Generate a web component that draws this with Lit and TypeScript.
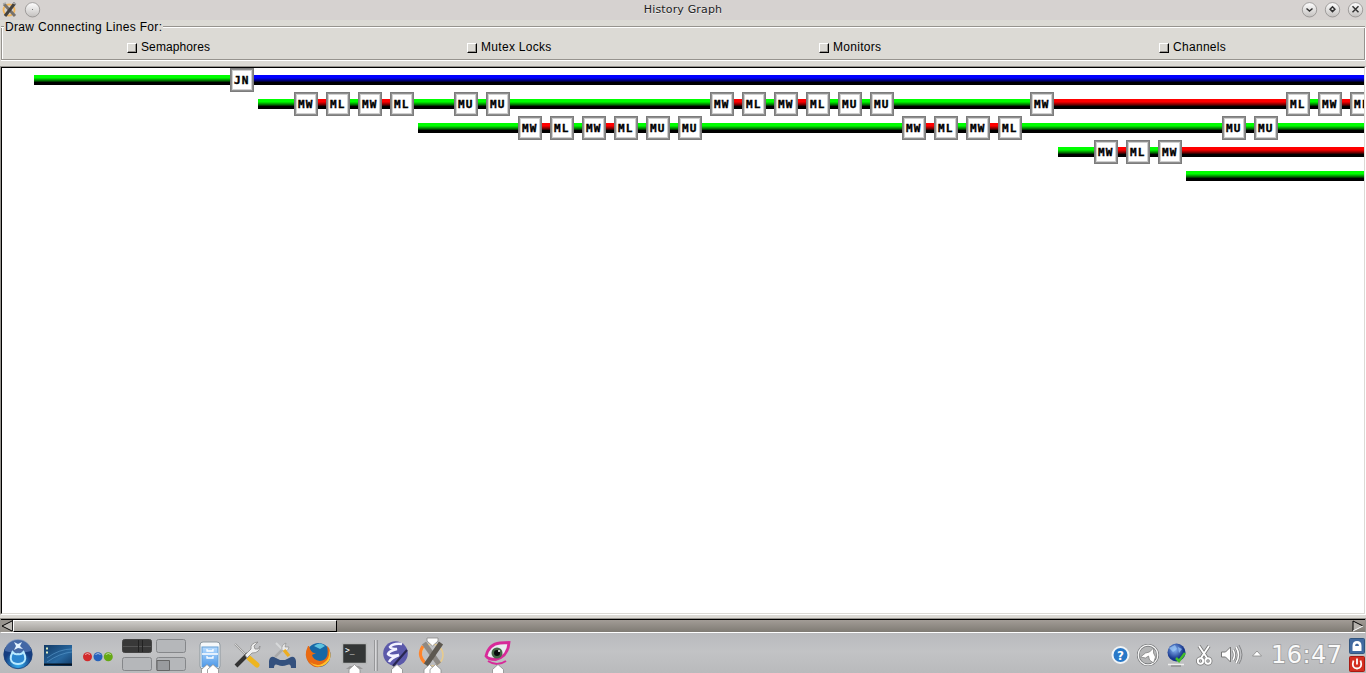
import { LitElement, html, css, svg } from "lit";
import { customElement } from "lit/decorators.js";
import { classMap } from "lit/directives/class-map.js";

const MW_ML = ["MW", "r8", "ML"];

const ROWS: { start: number; items: string[] }[] = [
  { start: 32, items: ["g196", "JN", "b1110"] },
  {
    start: 256,
    items: ["g36", ...MW_ML, "g8", ...MW_ML, "g40", "MU", "g8", "MU", "g200", ...MW_ML, "g8", ...MW_ML,
      "g8", "MU", "g8", "MU", "g136", "MW", "r232", "ML", "g8", ...MW_ML],
  },
  {
    start: 416,
    items: ["g100", ...MW_ML, "g8", ...MW_ML, "g8", "MU", "g8", "MU", "g200", ...MW_ML, "g8", ...MW_ML,
      "g200", "MU", "g8", "MU", "g86"],
  },
  { start: 1056, items: ["g36", ...MW_ML, "g8", "MW", "r182"] },
  { start: 1184, items: ["g178"] },
];

@customElement("history-track")
class HistoryTrack extends LitElement {
  static properties = { start: { type: Number }, items: { attribute: false } };
  declare start: number;
  declare items: string[];

  static styles = css`
    :host { display: flex; align-items: center; height: 24px; width: max-content; }
    .lead, .seg { flex: none; }
    .seg { height: 10px; }
    .g { background: linear-gradient(#00ff00 0 3px, #00dc00 3px 4px, #00aa00 4px 5px, #007800 5px 6px, #003c00 6px 7px, #000 7px); }
    .r { background: linear-gradient(#ff0000 0 3px, #dc0000 3px 4px, #aa0000 4px 5px, #780000 5px 6px, #3c0000 6px 7px, #000 7px); }
    .b { background: linear-gradient(#0000ff 0 3px, #0000dc 3px 4px, #0000aa 4px 5px, #000078 5px 6px, #00003c 6px 7px, #000 7px); }
    .node {
      box-sizing: border-box; flex: none; width: 24px; height: 24px; background: #fff;
      border: 1px solid #7c7c7c; box-shadow: inset 0 0 0 1px #8e8e8e, inset 0 0 0 2px #d0d0d0;
      font: bold 11px/22px "DejaVu Sans Mono", monospace; letter-spacing: 1.2px;
      -webkit-text-stroke: .4px #000;
      padding: 1px 0 0 3px; color: #000; overflow: hidden; white-space: nowrap;
    }
  `;

  render() {
    return html`<span class="lead" style="width:${this.start}px"></span>${this.items.map((it) =>
      /\d/.test(it)
        ? html`<span class=${classMap({ seg: true, [it[0]]: true })} style="width:${it.slice(1)}px"></span>`
        : html`<span class="node">${it}</span>`)}`;
  }
}

const up = (x: number) => svg`<path d="M${x} 664.5l5.500 5v4h-11v-4z" fill="#fff" stroke="#8b8b8b" stroke-width=".8"/>`;

@customElement("app-root")
class AppRoot extends LitElement {
  static styles = css`
    :host { display: flex; flex-direction: column; width: 1366px; height: 673px; overflow: hidden; background: #dcdad5; color: #000; }
    .title { flex: none; height: 20px; display: grid; grid-template-columns: 70px 1fr 70px; background: #d6d2d0; }
    .title svg { display: block; }
    .name { text-align: center; font: 11px/20px "DejaVu Sans", sans-serif; letter-spacing: .15px; color: #222; text-shadow: 0 1px #eee; }
    .group { height: 46px; flex: none; display: flex; flex-direction: column; }
    .caption { display: flex; align-items: center; height: 14px; font: 12px/14px "Liberation Sans", sans-serif; letter-spacing: .33px; }
    .caption span { padding: 0 1px; }
    .caption::before { content: ""; width: 3px; height: 2px; margin-left: 1px; background: linear-gradient(#96938e 50%, #fff 50%); }
    .caption::after { content: ""; flex: 1; height: 2px; background: linear-gradient(#96938e 50%, #fff 50%); margin-right: 1px; }
    .checks {
      box-sizing: border-box; height: 32px; margin: -6px 1px 0 1px; border: solid #96938e; border-width: 0 1px 1px;
      box-shadow: inset 1px 0 #fff, 0 1px #fff, 1px 0 #fff; display: flex; padding: 12px 0 0 125px;
      font: 12px/14px "Liberation Sans", sans-serif; letter-spacing: .3px;
    }
    .check { display: flex; align-items: center; gap: 4px; height: 14px; }
    .check i { box-sizing: border-box; width: 10px; height: 10px; margin-top: 1px; background: #dcdad5; border: 1px solid #000; border-top-color: #fff; border-left-color: #fff; box-shadow: inset -1px -1px #96938e; }
    .c0 { width: 340px; letter-spacing: .1px; } .c1 { width: 352px; } .c2 { width: 340px; }
    .canvas {
      box-sizing: border-box; flex: none; height: 549px; background: #fff; overflow: hidden;
      border: 1px solid #96938e; border-right-color: #fff; border-bottom-color: #fff;
    }
    .inner { box-sizing: border-box; height: 547px; border: 1px solid #000; border-right-color: #dcdad5; border-bottom-color: #dcdad5; overflow: hidden; }
    .scroll {
      box-sizing: border-box; flex: none; height: 15px; margin-top: 3px; border: 1px solid #96938e; border-bottom: 1px solid #fff;
      background: linear-gradient(#000 0 1px, #a29c96 1px, #7f7b74); display: flex;
    }
    .scroll svg { flex: none; display: block; }
    .thumb { box-sizing: border-box; height: 12px; width: 324px; margin-top: 1px; border: 1px solid #000; border-top-color: #fff; border-left-color: #fff; background: linear-gradient(#cfcdc9, #a4a19c); }
    .gap { flex: 1; }
    .panel { flex: none; height: 40px; background: linear-gradient(#b9babd, #c2c3c5 45%, #b9babc); }
    .panel svg { display: block; }
    .clock { font: 24px "DejaVu Sans", sans-serif; }
    .help { font: bold 12px "DejaVu Sans", sans-serif; }
    .prompt { font: 8px "DejaVu Sans Mono", monospace; }
  `;

  titleButton(x: number, glyph: string) {
    return svg`<circle cx=${x} cy="9.8" r="7.2" fill="url(#btn)" stroke="#8f8d8b" stroke-width=".8"/>
      <path d=${glyph} fill="none" stroke="#333" stroke-width="1.5"/>`;
  }

  render() {
    return html`
      <div class="title">
        <svg width="70" height="20">
          <defs><linearGradient id="btn" x2="0" y2="1"><stop stop-color="#fff"/><stop offset="1" stop-color="#c3c0be"/></linearGradient></defs>
          <circle cx="9" cy="10" r="5.5" fill="none" stroke="#f3b65a" stroke-width="1.8"/>
          <path d="M4 4l11 12" stroke="#77726d" stroke-width="3"/><path d="M15 3L5 16" stroke="#45423f" stroke-width="3"/>
          <path d="M3 4l3-1M13 3l3 1" stroke="#aaa" stroke-width="1.500"/>
          <circle cx="32.500" cy="9.800" r="7.200" fill="url(#btn)" stroke="#8f8d8b" stroke-width=".8"/><path d="M32 9.500h1" stroke="#777"/>
        </svg>
        <div class="name">History Graph</div>
        <svg width="70" height="20">
          ${this.titleButton(13.5, "M10.5 8.500l3 2.500l3-2.500")}
          ${this.titleButton(36.5, "M36.5 6.800l2.400 2.400l-2.400 2.400l-2.400-2.400z")}
          ${this.titleButton(59.5, "M56.5 6.200l6 6m0-6l-6 6")}
        </svg>
      </div>
      <div class="group">
        <div class="caption"><span>Draw Connecting Lines For:</span></div>
        <div class="checks">
          ${["Semaphores", "Mutex Locks", "Monitors", "Channels"].map((t, i) => html`<label class="check c${i}"><i></i>${t}</label>`)}
        </div>
      </div>
      <div class="canvas"><div class="inner">
        ${ROWS.map((r) => html`<history-track .start=${r.start} .items=${r.items}></history-track>`)}
      </div></div>
      <div class="scroll">
        <svg width="12" height="13"><rect y="1" width="12" height="12" fill="#98948e"/><path d="M11 2v10L1 7z" fill="#bebbb6"/><path d="M11 2L1 7l10 5" fill="none" stroke="#000"/><path d="M11.500 1v11" stroke="#222"/></svg>
        <div class="thumb"></div><div class="gap"></div>
        <svg width="13" height="13"><path d="M1 2v10L11 7z" fill="#b6b2ad"/><path d="M1 12V2l10 5" fill="none" stroke="#000"/><path d="M1 12L11 7" stroke="#fff"/></svg>
      </div>
      <div class="panel">
        <svg width="1366" height="40" viewBox="0 633 1366 40">
          <defs>
            <radialGradient id="orb" cy=".85"><stop stop-color="#36b3f3"/><stop offset="1" stop-color="#153d80"/></radialGradient>
            <linearGradient id="desk" x2="1" y2="1"><stop stop-color="#123a66"/><stop offset=".6" stop-color="#2868a0"/><stop offset="1" stop-color="#123a66"/></linearGradient>
            <radialGradient id="globe" cx=".4" cy=".35"><stop stop-color="#8ab8f5"/><stop offset="1" stop-color="#16358c"/></radialGradient>
            <linearGradient id="cab" x2="0" y2="1"><stop stop-color="#b8dcff"/><stop offset="1" stop-color="#4c98e8"/></linearGradient>
          </defs>
          <circle cx="18" cy="654.500" r="14.200" fill="url(#orb)" stroke="#173d78" stroke-width=".8"/>
          <path d="M5 651a13 12 0 0 1 26 0q-13 4-26 0z" fill="#6b8dc4" opacity=".55"/>
          <path d="M12.500 652q-4 8 1 11 4.500 2 9 0 5-3 1-11-2.500 3-5.500 2-3 1-5.500-2z" fill="#2b86cf" stroke="#b8eaff" stroke-width="2"/>
          <path d="M14 642l4 2 4-2-2 4 3 3-5-1-4 2 2-4z" fill="#e4f3ff"/>
          <rect x="44" y="645" width="28" height="21" fill="url(#desk)"/>
          <path d="M47 658q12-9 25-9M47 662q13-9 25-10" stroke="#5c9cce" stroke-width=".6" fill="none"/>
          <path d="M44 664.500h28" stroke="#071423" stroke-width="2"/><path d="M46 648.500h2m-2 4h2" stroke="#ddeec0" stroke-width="2"/>
          <circle cx="87.500" cy="656.700" r="4.500" fill="#d22a2c"/><circle cx="98" cy="656.700" r="4.500" fill="#2762bb"/><circle cx="108.300" cy="656.700" r="4.500" fill="#65a813"/>
          <path d="M85 654.500q2.500-2 5 0m5.500 0q2.500-2 5 0m5.300 0q2.500-2 5 0" stroke="#fff" opacity=".6" fill="none"/>
          <g fill="#b5b7ba" stroke="#85878a"><rect x="122.500" y="639.500" width="29" height="13" rx="2" fill="#383838" stroke="#444"/><rect x="156.500" y="639.500" width="29" height="13" rx="2"/><rect x="122.500" y="657.500" width="29" height="13" rx="2"/><rect x="156.500" y="657.500" width="29" height="13" rx="2"/><path d="M157 660.500h12.500v10H157z" fill="#999b9e" stroke="#666"/></g>
          <path d="M123 646.500h28" stroke="#555"/><path d="M138.500 640v12M142.500 640v12" stroke="#222"/>
          <rect x="200" y="642" width="20" height="27" rx="3" fill="#f5f8fa" stroke="#8d989f"/><rect x="202" y="647" width="16" height="20" fill="url(#cab)" stroke="#659ed4"/><path d="M202 654h16M207 649v2h6v-2M207 656v2h6v-2" stroke="#fff" stroke-width="1.300" fill="none"/>
          ${up(207)}${up(213)}
          <path d="M235 644l13 13" stroke="#999" stroke-width="2"/><path d="M235 644l12 12" stroke="#eee" stroke-width=".7"/><path d="M249 658l8 7" stroke="#edb51f" stroke-width="5" stroke-linecap="round"/>
          <path d="M236 666l12-12" stroke="#333" stroke-width="4"/><path d="M245 655l6-6q-1-6 7-7l-4 4 1 3 3 0 2-3q0 7-8 7l-5 5z" fill="#eee" stroke="#888" stroke-width=".8"/>
          <path d="M269 668v-7q1-5 5-4l6 3h5l6-3q4-1 5 4v7h-5q0-5-4-3-5 2-9 0-4-2-4 3z" fill="#34517e"/>
          <path d="M275 657l9-9" stroke="#aaa" stroke-width="2.500"/><path d="M276 643l10 10" stroke="#d7d9da" stroke-width="2"/><path d="M282 650q-1-5 4-7l-1 4 4 0q-1 5-6 4z" fill="#e8e8e8" stroke="#888" stroke-width=".6"/><path d="M284 650l5 6" stroke="#edad20" stroke-width="3.500"/>
          <circle cx="318.500" cy="655" r="12" fill="#1767a5"/><path d="M314 646q6-5 11 0l-5 3z" fill="#5dc2df"/><path d="M308 646q-5 10 1 17 8 8 17 1 7-7 3-16l-2-2q3 14-7 15-7-1-8-6l4-2q-5 1-7-7z" fill="#e96a12"/><path d="M310 662q9 7 17-2 3-4 2-11 4 10-3 15-9 6-16-2z" fill="#ffc22e"/>
          <rect x="342.500" y="643.500" width="24" height="20" fill="#333636" stroke="#b6b8b8" stroke-width="1.500"/><text x="345" y="653" class="prompt" fill="#fff">&gt;_</text><path d="M350 666h9l4 3h-17z" fill="#999"/>
          ${up(354.5)}
          <path d="M374.500 640v31m3-31v31" stroke="#969799"/><path d="M375.500 640v31" stroke="#d8d8da"/>
          <circle cx="395.500" cy="653.500" r="12.300" fill="#5b59aa"/><path d="M402 644q-9-1-12 3 1 2 7 2-8 2-9 5 2 3 11 1-8 3-10 7" fill="none" stroke="#f3f3ff" stroke-width="2.500"/><path d="M407 650l-14 16" stroke="#282750" stroke-width="2"/>
          ${up(397)}
          <circle cx="432" cy="655" r="11" fill="none" stroke="#e8cb8c" stroke-width="1.500"/><path d="M423 646q-6 9 2 17" fill="none" stroke="#ff842b" stroke-width="3"/>
          <path d="M424 643l15 21" stroke="#8d8984" stroke-width="5"/><path d="M441 643l-15 22" stroke="#5d5850" stroke-width="5"/><path d="M427 638h11v3l-5.500 5-5.500-5z" fill="#fff" stroke="#888" stroke-width=".8"/>
          ${up(429.5)}${up(435.5)}
          <path d="M486 656q3-12 14-13l9-0.500q-1 14-13 17-8 0-10-3.500z" fill="#e9edf0" stroke="#d72a99" stroke-width="2.800"/><circle cx="497" cy="653" r="5.500" fill="#456747"/><circle cx="497" cy="653" r="3" fill="#080b0c"/><circle cx="499" cy="651" r="1" fill="#fff"/><path d="M488 661q9 6 18 0" fill="none" stroke="#d72a99" stroke-width="2"/>
          ${up(498)}
          <circle cx="1120.500" cy="655" r="8" fill="#2878c8" stroke="#f1f4f6" stroke-width="2"/><text x="1120.500" y="659.500" text-anchor="middle" class="help" fill="#fff">?</text>
          <circle cx="1148" cy="655" r="9.800" fill="#b4b5b6" stroke="#707274" stroke-width="2.500"/><circle cx="1148" cy="655" r="9.800" fill="none" stroke="#f6f6f6" stroke-width="1.300"/><path d="M1140.500 657l5-4 4-1 4-4v5l2 4-2 6-4-3-1-4-3 2z" fill="#fff" stroke="#777" stroke-width=".7"/>
          <circle cx="1176.500" cy="652.500" r="9" fill="url(#globe)"/><path d="M1169 648l6-3 2 4-4 3zm9-1l4 2-3 4z" fill="#9bc7f5" opacity=".7"/><path d="M1176 658l3 3 6-8" fill="none" stroke="#44bd29" stroke-width="2.500"/><path d="M1168 664.500h16" stroke="#eee" stroke-width="1.500"/><path d="M1171 666h10" stroke="#777"/>
          <g fill="none" stroke="#777" stroke-width="3.500"><path d="M1199 646l8 12m2-12l-8 12"/><circle cx="1200.500" cy="661" r="2.700"/><circle cx="1208" cy="661" r="2.700"/></g><g fill="none" stroke="#fff" stroke-width="1.900"><path d="M1199 646l8 12m2-12l-8 12"/><circle cx="1200.500" cy="661" r="2.700"/><circle cx="1208" cy="661" r="2.700"/></g>
          <path d="M1221.500 652h4l5-5v15l-5-5h-4z" fill="#fff" stroke="#777"/><path d="M1233 650q3 5 0 10m3-13q5 8 0 16" fill="none" stroke="#777" stroke-width="3"/><path d="M1233 650q3 5 0 10m3-13q5 8 0 16" fill="none" stroke="#fff" stroke-width="1.600"/><path d="M1239 645q6 10 0 19" fill="none" stroke="#858688"/>
          <path d="M1257 651l4.500 5h-9z" fill="#fff" stroke="#888" stroke-width=".8"/>
          <text x="1271" y="663" class="clock" textLength="71" fill="#fafafa" stroke="#888" stroke-opacity=".55" stroke-width="1.800" paint-order="stroke">16:47</text>
          <rect x="1349.500" y="638.500" width="15" height="15" rx="1" fill="#41699f" stroke="#31557f"/><path d="M1352.500 646q0-5 4.500-5t4.500 5v5h-9z" fill="#fff"/><path d="M1355 646q0-2.500 2-2.500t2 2.500z" fill="#41699f"/>
          <rect x="1349.500" y="656.500" width="15" height="15" rx="1" fill="#d42e20" stroke="#a71a13"/><path d="M1353.500 660.500q-2.500 7.500 3.500 8 6-.5 3.500-8M1357 658.500v6" fill="none" stroke="#fff" stroke-width="1.800"/>
        </svg>
      </div>`;
  }
}
